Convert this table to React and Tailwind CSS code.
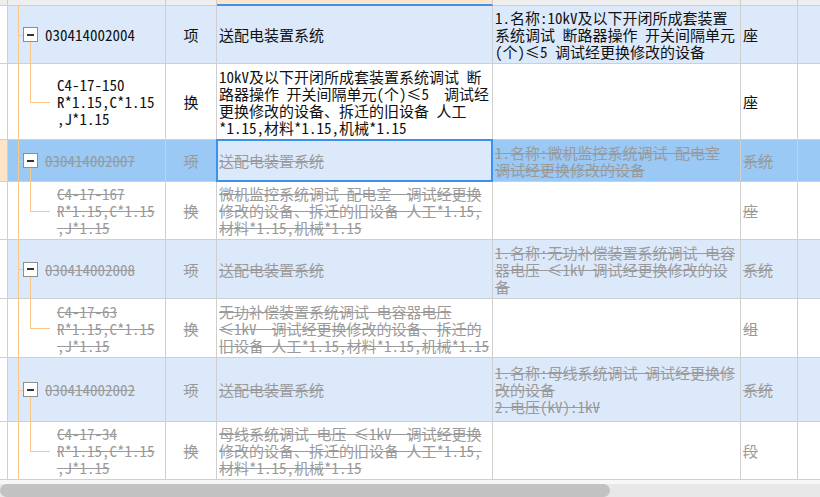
import React from "react";

const rows = [
    { kind: 'parent', h: 'h-[58px]', code: '030414002004', unit: '项', name: ['送配电装置系统'],
      desc: ['1.名称:10kV及以下开闭所成套装置', '系统调试 断路器操作 开关间隔单元', '(个)≤5 调试经更换修改的设备'], u2: '座' },
    { kind: 'child', h: 'h-[76px]', code: ['C4-17-150', 'R*1.15,C*1.15', ',J*1.15'], unit: '换',
      name: ['10kV及以下开闭所成套装置系统调试 断', '路器操作 开关间隔单元(个)≤5  调试经', '更换修改的设备、拆迁的旧设备 人工', '*1.15,材料*1.15,机械*1.15'], desc: [], u2: '座' },
    { kind: 'parent', h: 'h-[42px]', code: '030414002007', unit: '项', name: ['送配电装置系统'], strike: true, selected: true,
      desc: ['1.名称:微机监控系统调试 配电室', '调试经更换修改的设备'], u2: '系统' },
    { kind: 'child', h: 'h-[58px]', code: ['C4-17-167', 'R*1.15,C*1.15', ',J*1.15'], unit: '换', strike: true,
      name: ['微机监控系统调试 配电室  调试经更换', '修改的设备、拆迁的旧设备 人工*1.15,', '材料*1.15,机械*1.15'], desc: [], u2: '座' },
    { kind: 'parent', h: 'h-[59px]', code: '030414002008', unit: '项', name: ['送配电装置系统'], strike: true,
      desc: ['1.名称:无功补偿装置系统调试 电容', '器电压 ≤1kV 调试经更换修改的设', '备'], u2: '系统' },
    { kind: 'child', h: 'h-[59px]', code: ['C4-17-63', 'R*1.15,C*1.15', ',J*1.15'], unit: '换', strike: true,
      name: ['无功补偿装置系统调试 电容器电压', '≤1kV  调试经更换修改的设备、拆迁的', '旧设备 人工*1.15,材料*1.15,机械*1.15'], desc: [], u2: '组' },
    { kind: 'parent', h: 'h-[64px]', code: '030414002002', unit: '项', name: ['送配电装置系统'], strike: true,
      desc: ['1.名称:母线系统调试 调试经更换修', '改的设备', '2.电压(kV):1kV'], u2: '系统' },
    { kind: 'child', h: 'h-[58px]', code: ['C4-17-34', 'R*1.15,C*1.15', ',J*1.15'], unit: '换', strike: true,
      name: ['母线系统调试 电压 ≤1kV  调试经更换', '修改的设备、拆迁的旧设备 人工*1.15,', '材料*1.15,机械*1.15'], desc: [], u2: '段' },
];

function Lines({ lines, strike }) {
    return (
        <div className={strike ? "text-[#9a9a9a]" : "text-[#111]"}>
            {lines.map((l, i) => (
                <div key={i} className={"whitespace-pre " + (strike ? "line-through decoration-[#9a9a9a]" : "")}>{l}</div>
            ))}
        </div>
    );
}

function Row({ r }) {
    const parent = r.kind === 'parent';
    const bg = r.selected ? 'bg-[#99c9f4]' : parent ? 'bg-[#dce9fb]' : 'bg-white';
    const cell = "h-full border-r border-[#cfcfcf] flex items-center shrink-0";
    return (
        <div className={"flex border-b border-[#cfcfcf] " + r.h}>
            <div className={cell + " w-[8px] " + (r.selected ? 'bg-[#fde4c6]' : 'bg-white')}></div>
            <div className={"relative " + cell + " w-[158px] " + bg}>
                <div className="absolute left-[10px] -top-px -bottom-px w-px bg-[#f9c686]"></div>
                {parent ? (
                    <>
                        <div className="absolute left-[10px] top-1/2 w-[5px] h-px bg-[#f9c686]"></div>
                        <div className="absolute left-[22px] top-1/2 -bottom-px w-px bg-[#f9c686]"></div>
                        <div className="relative ml-[15px] w-[15px] h-[15px] border border-[#8e8e8e] bg-white flex items-center justify-center">
                            <div className="w-[7px] h-[2px] bg-[#333]"></div>
                        </div>
                        <div className="ml-[7px]"><Lines lines={[r.code]} strike={r.strike} /></div>
                    </>
                ) : (
                    <>
                        <div className="absolute left-[22px] -top-px bottom-1/2 w-px bg-[#f9c686]"></div>
                        <div className="absolute left-[22px] top-1/2 w-[20px] h-px bg-[#f9c686]"></div>
                        <div className="pl-[49px]"><Lines lines={r.code} strike={r.strike} /></div>
                    </>
                )}
            </div>
            <div className={cell + " w-[51px] justify-center " + bg}><Lines lines={[r.unit]} strike={r.strike} /></div>
            <div className={"relative " + cell + " w-[276px] pl-[2px] " + (r.selected ? 'bg-[#dce9fb]' : bg)}>
                {r.selected && <div className="absolute -top-px -left-px -right-px -bottom-px border-2 border-[#3c91ec]"></div>}
                <Lines lines={r.name} strike={r.strike} />
            </div>
            <div className={cell + " w-[248px] pl-[2px] " + bg}><Lines lines={r.desc} strike={r.strike} /></div>
            <div className={cell + " w-[57px] pl-[2px] " + bg}><Lines lines={[r.u2]} strike={r.strike} /></div>
            <div className={"h-full flex-1 " + bg}></div>
        </div>
    );
}

export default function App() {
    return (
        <div className="w-[820px] h-[497px] overflow-hidden bg-white text-[15px] leading-[17px] font-['Noto_Sans_Mono_CJK_SC','Noto_Sans_CJK_SC',monospace]">
            {/* column header strip */}
            <div className="flex h-[6px]">
                <div className="w-[8px] shrink-0 bg-[#eeeeee] border-r border-b border-[#cfcfcf]"></div>
                <div className="w-[158px] shrink-0 bg-[#eeeeee] border-r border-b border-[#cfcfcf]"></div>
                <div className="w-[51px] shrink-0 bg-[#eeeeee] border-r border-b border-[#cfcfcf]"></div>
                <div className="w-[276px] shrink-0 bg-[#fce6c9] border-r border-[#cfcfcf] border-b-2 border-b-[#3c91ec]"></div>
                <div className="w-[248px] shrink-0 bg-[#eeeeee] border-r border-b border-[#cfcfcf]"></div>
                <div className="w-[57px] shrink-0 bg-[#eeeeee] border-r border-b border-[#cfcfcf]"></div>
                <div className="flex-1 bg-[#eeeeee] border-b border-[#cfcfcf]"></div>
            </div>
            {rows.map((r, i) => <Row key={i} r={r} />)}
            <div className="h-[4px] bg-[#f7f7f7]"></div>
            <div className="h-[13px] bg-[#e8e8e8] flex">
                <div className="w-[610px] h-full rounded-full bg-[#c2c2c2]"></div>
            </div>
        </div>
    );
}
